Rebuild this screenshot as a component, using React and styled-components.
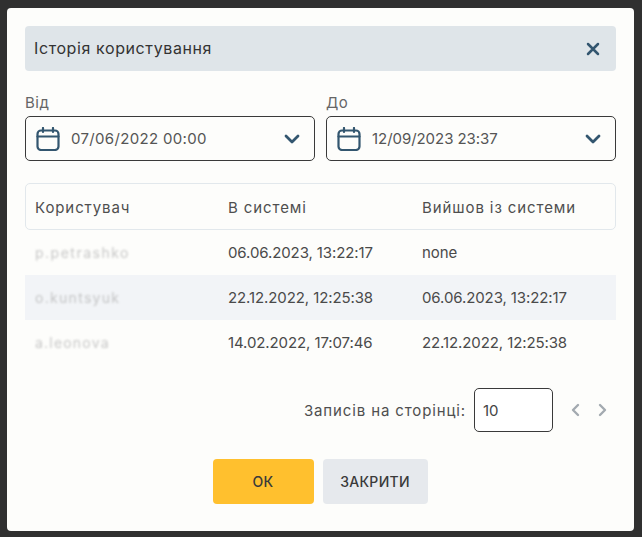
import React from 'react';
import styled, { createGlobalStyle } from 'styled-components';

const GlobalStyle = createGlobalStyle`
  html, body {
    margin: 0;
    padding: 0;
    height: 100%;
    background: #303030;
    font-family: Inter, "Open Sans", "Liberation Sans", sans-serif;
    overflow: hidden;
  }
  * { box-sizing: border-box; }
`;

const Page = styled.div`
  width: 642px;
  height: 537px;
  padding: 8px 8px 6px 7px;
`;

const Modal = styled.div`
  width: 627px;
  height: 523px;
  background: #fdfdfb;
  border-radius: 4px;
  padding: 18px 18px 0;
  display: flex;
  flex-direction: column;
`;

const Header = styled.div`
  height: 45px;
  background: #dfe5e9;
  border-radius: 4px;
  padding: 0 15px 0 9px;
  display: flex;
  align-items: center;
  justify-content: space-between;
`;

const Title = styled.h2`
  margin: -2px 0 0;
  font-size: 16px;
  font-weight: 400;
  color: #333;
  letter-spacing: 0.6px;
`;

const CloseButton = styled.button`
  border: 0;
  padding: 0;
  background: none;
  width: 16px;
  height: 16px;
  display: flex;
  color: #33566f;
`;

const DateRow = styled.div`
  display: grid;
  grid-template-columns: 290px 290px;
  gap: 11px;
  margin-top: 23px;
`;

const Field = styled.div`
  display: flex;
  flex-direction: column;
`;

const Label = styled.label`
  font-size: 15px;
  line-height: 17px;
  height: 22px;
  color: #666;
  letter-spacing: 0.5px;
`;

const Select = styled.div`
  height: 45px;
  border: 1px solid #3a3a3a;
  border-radius: 5px;
  display: flex;
  align-items: center;
  padding: 0 14px 0 10px;
  color: #33566f;
`;

const DateValue = styled.span`
  flex: 1;
  margin-left: 11px;
  font-size: 15px;
  color: #555;
  letter-spacing: ${({ $spacing }) => $spacing};
`;

const Table = styled.div`
  margin-top: 22px;
`;

const HeadRow = styled.div`
  display: grid;
  grid-template-columns: 193px 194px 1fr;
  height: 47px;
  align-items: center;
  border: 1px solid #e2e8ec;
  border-radius: 5px;
  padding-left: 9px;
`;

const HeadCell = styled.div`
  font-size: 15px;
  color: #4f4f4f;
  letter-spacing: 0.9px;
  padding-top: 1px;
`;

const Row = styled.div`
  display: grid;
  grid-template-columns: 193px 194px 1fr;
  height: 45px;
  align-items: center;
  padding-left: 10px;
  background: ${({ $striped }) => ($striped ? '#f2f4f7' : 'transparent')};
`;

const Cell = styled.div`
  font-size: 15px;
  color: #4a4a4a;
  letter-spacing: -0.1px;
`;

const HiddenName = styled.div`
  font-size: 14px;
  color: #b0b0b0;
  filter: blur(0.8px);
  opacity: 0.7;
  letter-spacing: ${({ $spacing }) => $spacing};
`;

const Pager = styled.div`
  margin-top: 23px;
  height: 44px;
  display: flex;
  align-items: center;
  justify-content: flex-end;
  padding-right: 8px;
`;

const PagerLabel = styled.span`
  font-size: 15px;
  color: #4f4f4f;
  letter-spacing: 0.87px;
  margin-right: 8px;
`;

const PageSize = styled.div`
  width: 79px;
  height: 44px;
  border: 1px solid #3a3a3a;
  border-radius: 5px;
  background: #fff;
  font-size: 15px;
  color: #444;
  display: flex;
  align-items: center;
  padding-left: 8px;
  margin-right: 17px;
`;

const PagerArrows = styled.div`
  display: flex;
  gap: 16px;
  color: #a3aab0;
`;

const Actions = styled.div`
  display: flex;
  justify-content: center;
  gap: 9px;
  margin-top: 27px;
  padding-right: 1px;
`;

const ActionButton = styled.button`
  height: 45px;
  width: ${({ $primary }) => ($primary ? '101px' : '105px')};
  border: 0;
  border-radius: 4px;
  background: ${({ $primary }) => ($primary ? '#ffc02e' : '#e6e9ed')};
  color: #3a3a3a;
  font-family: inherit;
  font-size: 14px;
  font-weight: 500;
  letter-spacing: 0.3px;
  padding-bottom: 2px;
`;

const CalendarIcon = () => (
  <svg width="24" height="24" viewBox="0 0 24 24" fill="none" stroke="currentColor" strokeWidth="2.2" strokeLinecap="round">
    <rect x="1.5" y="3.5" width="21" height="19.5" rx="3.5" />
    <path d="M1.5 9.5h21M7 1v4M17 1v4" />
  </svg>
);

const ChevronDown = () => (
  <svg width="16" height="10" viewBox="0 0 16 10" fill="none" stroke="currentColor" strokeWidth="2.8" strokeLinecap="round" strokeLinejoin="round">
    <path d="M2 2l6 6 6-6" />
  </svg>
);

const rows = [
  { user: 'p.petrashko', spacing: '1.5px', login: '06.06.2023, 13:22:17', logout: 'none' },
  { user: 'o.kuntsyuk', spacing: '1.3px', login: '22.12.2022, 12:25:38', logout: '06.06.2023, 13:22:17' },
  { user: 'a.leonova', spacing: '1.2px', login: '14.02.2022, 17:07:46', logout: '22.12.2022, 12:25:38' },
];

const App = () => (
  <Page>
    <GlobalStyle />
    <Modal>
      <Header>
        <Title>Історія користування</Title>
        <CloseButton>
          <svg width="16" height="16" viewBox="0 0 16 16" fill="none" stroke="currentColor" strokeWidth="2.5" strokeLinecap="round">
            <path d="M3 3l10 10M13 3L3 13" />
          </svg>
        </CloseButton>
      </Header>

      <DateRow>
        <Field>
          <Label>Від</Label>
          <Select>
            <CalendarIcon />
            <DateValue $spacing="0.33px">07/06/2022 00:00</DateValue>
            <ChevronDown />
          </Select>
        </Field>
        <Field>
          <Label>До</Label>
          <Select>
            <CalendarIcon />
            <DateValue $spacing="-0.05px">12/09/2023 23:37</DateValue>
            <ChevronDown />
          </Select>
        </Field>
      </DateRow>

      <Table>
        <HeadRow>
          <HeadCell>Користувач</HeadCell>
          <HeadCell>В системі</HeadCell>
          <HeadCell>Вийшов із системи</HeadCell>
        </HeadRow>
        {rows.map((row, i) => (
          <Row key={row.user} $striped={i === 1}>
            <HiddenName $spacing={row.spacing}>{row.user}</HiddenName>
            <Cell>{row.login}</Cell>
            <Cell>{row.logout}</Cell>
          </Row>
        ))}
      </Table>

      <Pager>
        <PagerLabel>Записів на сторінці:</PagerLabel>
        <PageSize>10</PageSize>
        <PagerArrows>
          <svg width="11" height="14" viewBox="0 0 11 14" fill="none" stroke="currentColor" strokeWidth="2.4" strokeLinecap="round" strokeLinejoin="round">
            <path d="M8 2L3 7l5 5" />
          </svg>
          <svg width="11" height="14" viewBox="0 0 11 14" fill="none" stroke="currentColor" strokeWidth="2.4" strokeLinecap="round" strokeLinejoin="round">
            <path d="M3 2l5 5-5 5" />
          </svg>
        </PagerArrows>
      </Pager>

      <Actions>
        <ActionButton $primary>ОК</ActionButton>
        <ActionButton>ЗАКРИТИ</ActionButton>
      </Actions>
    </Modal>
  </Page>
);

export default App;
